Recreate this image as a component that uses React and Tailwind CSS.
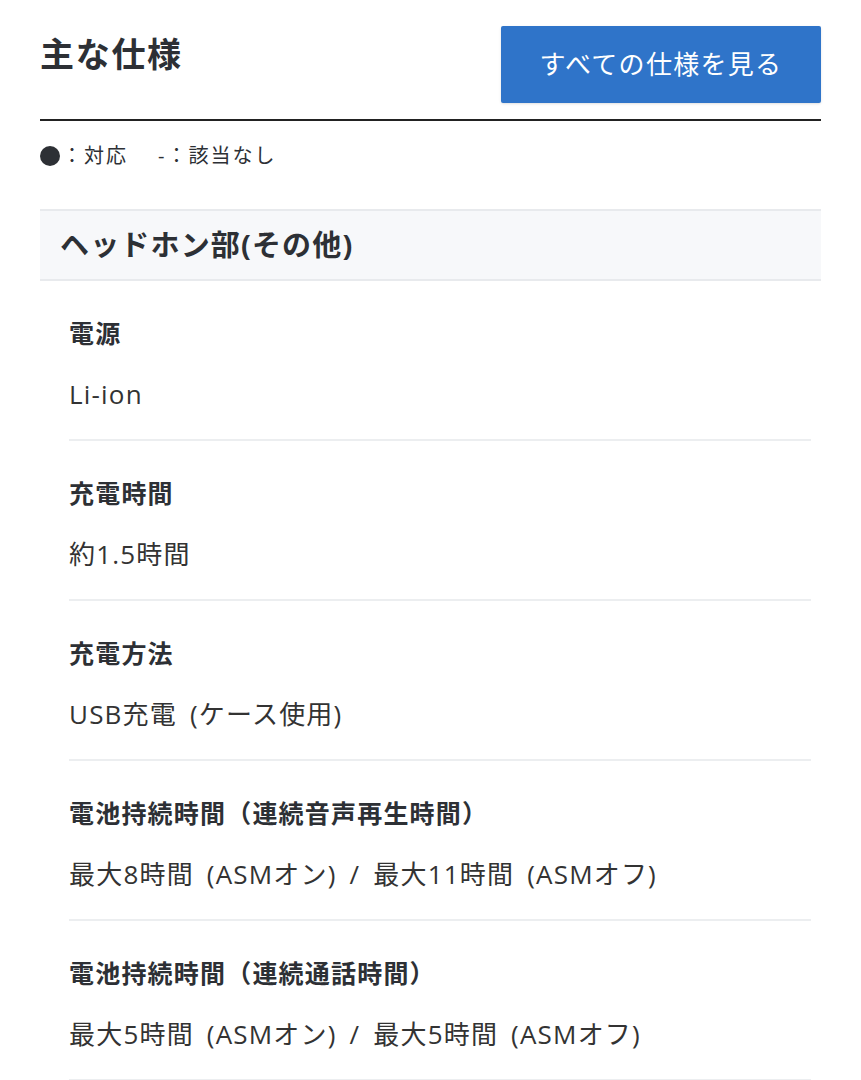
import React from 'react';

const specs = [
  { label: '電源', value: 'Li-ion' },
  { label: '充電時間', value: '約1.5時間' },
  { label: '充電方法', value: 'USB充電 (ケース使用)' },
  { label: '電池持続時間（連続音声再生時間）', value: '最大8時間 (ASMオン) / 最大11時間 (ASMオフ)' },
  { label: '電池持続時間（連続通話時間）', value: '最大5時間 (ASMオン) / 最大5時間 (ASMオフ)' },
];

const App = () => {
  return (
    <div
      className="w-[861px] h-[1080px] overflow-hidden bg-white text-[#2d3035] tracking-[0.075em]"
      style={{ fontFamily: '"Open Sans", "Noto Sans CJK JP", sans-serif' }}
    >
      <div className="mx-[40px]">
        {/* ヘッダー */}
        <div className="flex items-start justify-between pt-[26px] pb-[16px] border-b-2 border-[#222]">
          <h2 className="text-[34px] font-bold leading-[58px] -mt-[1px] tracking-[0.05em]">主な仕様</h2>
          <button className="w-[320px] h-[77px] bg-[#2f74c9] text-white text-[26px] tracking-[0.05em] rounded-[2px] shadow-sm">
            すべての仕様を見る
          </button>
        </div>

        {/* 凡例 */}
        <div className="flex items-center text-[20px] leading-[30px] mt-[20px] tracking-[0.1em]">
          <span className="inline-block w-[20px] h-[20px] rounded-full bg-[#2d3035] mr-[2px]" />
          <span>：対応</span>
          <span className="ml-[30px]">-：該当なし</span>
        </div>

        {/* セクション */}
        <div className="mt-[38px] h-[72px] bg-[#f7f8fa] border-y-2 border-[#e8eaed] flex items-center pl-[20px]">
          <h3 className="text-[29px] font-bold tracking-[0.04em]">ヘッドホン部(その他)</h3>
        </div>

        <div className="pl-[29px] pr-[10px]">
          {specs.map((s, i) => (
            <div key={i} className="h-[160px] pt-[34px] border-b-2 border-[#eceef0]">
              <div className="text-[25px] font-bold leading-[36px]">{s.label}</div>
              <div className="text-[26px] leading-[36px] mt-[25px] text-[#333] [word-spacing:5px]">{s.value}</div>
            </div>
          ))}
        </div>
      </div>
    </div>
  );
};

export default App;
